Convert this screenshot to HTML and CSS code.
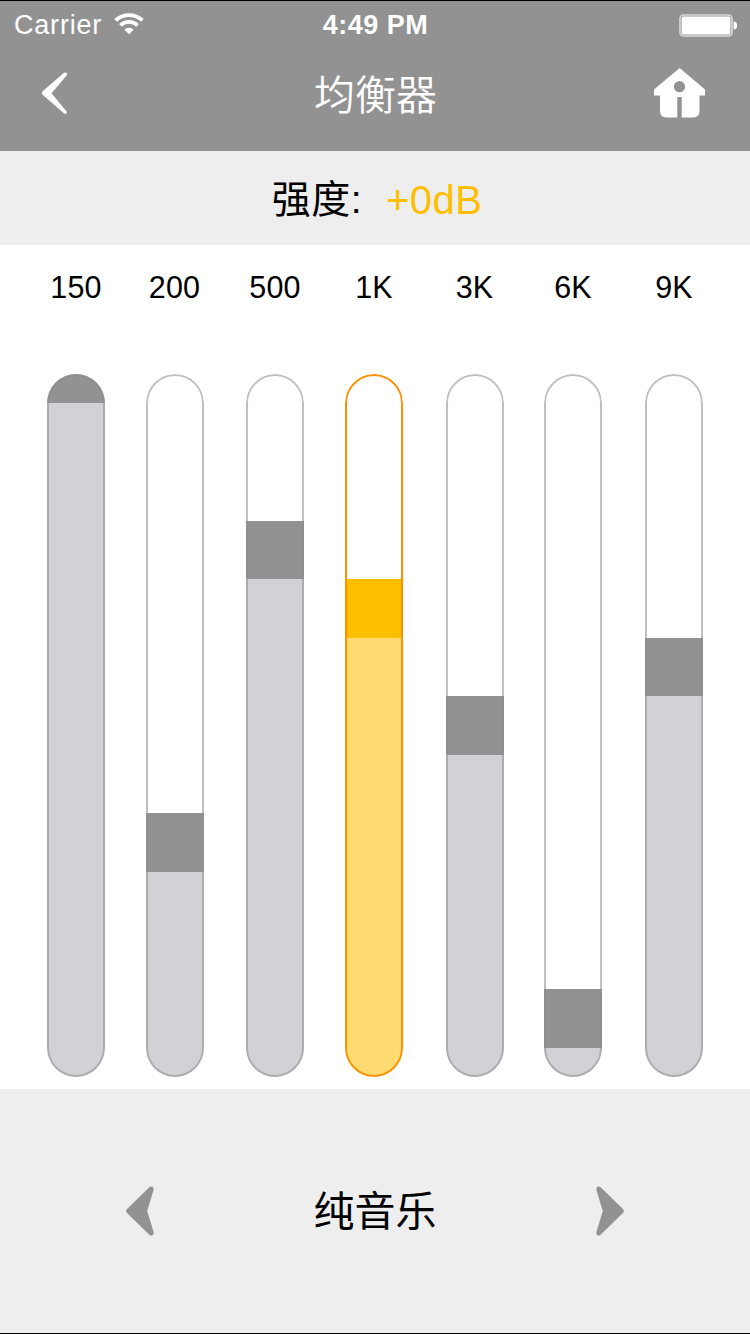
FILE: index.html
```html
<!DOCTYPE html>
<html lang="zh-CN">
<head>
    <meta charset="UTF-8">
    <meta name="viewport" content="width=device-width, initial-scale=1.0">
    <title>均衡器</title>
    <link rel="stylesheet" href="styles.css">
</head>
<body>
    <header class="header">
        <div class="status-bar">
            <div class="carrier">
                <span>Carrier</span>
                <svg class="wifi" width="30" height="22" viewBox="0 0 30 22">
                    <path d="M1.6 7.4A19.5 19.5 0 0 1 28.4 7.4" fill="none" stroke="#fff" stroke-width="3.8"/>
                    <path d="M6.4 12.4A12.3 12.3 0 0 1 23.6 12.4" fill="none" stroke="#fff" stroke-width="3.6"/>
                    <path d="M10.3 16.6A6.8 6.8 0 0 1 19.7 16.6L15 21.3Z" fill="#fff"/>
                </svg>
            </div>
            <span class="time">4:49 PM</span>
            <svg class="battery" width="58" height="24" viewBox="0 0 58 24">
                <rect x="1" y="1" width="52" height="21" rx="3.5" fill="none" stroke="#fff" stroke-opacity="0.65" stroke-width="1.6"/>
                <rect x="2.6" y="2.6" width="48.8" height="17.8" rx="1.5" fill="#fff"/>
                <path d="M54.6 7.5A3.6 4 0 0 1 54.6 15.5Z" fill="#fff"/>
            </svg>
        </div>
        <div class="nav-bar">
            <svg class="back" width="26" height="43" viewBox="0 0 26 43">
                <path d="M0.4 19.6L22 0.8Q24 0 25 1.2Q25.6 2.2 24.6 3.4L9.5 21.2L24.4 39.2Q25.4 40.6 24.6 41.6Q23.4 42.6 21.8 41.2L0.4 22.4Q-0.6 21 0.4 19.6Z" fill="#fff"/>
            </svg>
            <h1 class="title">均衡器</h1>
            <svg class="home" width="51" height="50" viewBox="0 0 51 50">
                <path fill-rule="evenodd" d="M25.7 0L51 21.5V27.5H45.5V43Q45.5 49.5 39 49.5H27.7V29H23.3V49.5H12.5Q6 49.5 6 43V27.5H0V21.5ZM25.5 13.1A5.6 5.6 0 1 0 25.5 24.3A5.6 5.6 0 1 0 25.5 13.1Z" fill="#fff"/>
            </svg>
        </div>
    </header>

    <div class="strength">
        <span class="strength-label">强度:</span>
        <span class="strength-value">+0dB</span>
    </div>

    <!-- 各频段滑块 -->
    <div class="equalizer">
        <div class="band">
            <span class="freq">150</span>
            <div class="track">
                <div class="handle" style="height: 29px"></div>
                <div class="fill"></div>
            </div>
        </div>
        <div class="band">
            <span class="freq">200</span>
            <div class="track">
                <div class="empty" style="height: 439px"></div>
                <div class="handle" style="height: 59px"></div>
                <div class="fill"></div>
            </div>
        </div>
        <div class="band">
            <span class="freq">500</span>
            <div class="track">
                <div class="empty" style="height: 147px"></div>
                <div class="handle" style="height: 58px"></div>
                <div class="fill"></div>
            </div>
        </div>
        <div class="band active">
            <span class="freq">1K</span>
            <div class="track">
                <div class="empty" style="height: 205px"></div>
                <div class="handle" style="height: 59px"></div>
                <div class="fill"></div>
            </div>
        </div>
        <div class="band">
            <span class="freq">3K</span>
            <div class="track">
                <div class="empty" style="height: 322px"></div>
                <div class="handle" style="height: 59px"></div>
                <div class="fill"></div>
            </div>
        </div>
        <div class="band">
            <span class="freq">6K</span>
            <div class="track">
                <div class="empty" style="height: 615px"></div>
                <div class="handle" style="height: 59px"></div>
                <div class="fill"></div>
            </div>
        </div>
        <div class="band">
            <span class="freq">9K</span>
            <div class="track">
                <div class="empty" style="height: 264px"></div>
                <div class="handle" style="height: 58px"></div>
                <div class="fill"></div>
            </div>
        </div>
    </div>

    <!-- 音效模式切换 -->
    <footer class="preset">
        <svg class="arrow" width="28" height="50" viewBox="0 0 28 50">
            <path d="M0.8 23.2L23.6 1Q25 -0.1 26.6 0.8Q27.9 1.8 27.6 4L21.2 25L27.6 46Q27.9 48.2 26.6 49.2Q25 50.1 23.6 49L0.8 26.8Q-0.5 25 0.8 23.2Z" fill="#929292"/>
        </svg>
        <span class="preset-name">纯音乐</span>
        <svg class="arrow next" width="28" height="50" viewBox="0 0 28 50">
            <path d="M0.8 23.2L23.6 1Q25 -0.1 26.6 0.8Q27.9 1.8 27.6 4L21.2 25L27.6 46Q27.9 48.2 26.6 49.2Q25 50.1 23.6 49L0.8 26.8Q-0.5 25 0.8 23.2Z" fill="#929292"/>
        </svg>
    </footer>
</body>
</html>
```
FILE: styles.css
```css
* {
    box-sizing: border-box;
}
body {
    margin: 0;
    width: 750px;
    height: 1334px;
    display: flex;
    flex-direction: column;
    font-family: "Liberation Sans", "Noto Sans CJK SC", sans-serif;
    background-color: #fff;
    color: #000;
    border-top: 1px solid #000;
    border-bottom: 1px solid #000;
    overflow: hidden;
}
svg {
    display: block;
}
.header {
    height: 150px;
    background-color: #929292;
    color: #fff;
}
.status-bar {
    height: 48px;
    padding: 1px 13px 0 14px;
    display: grid;
    grid-template-columns: 1fr auto 1fr;
    align-items: center;
    font-size: 27px;
}
.carrier {
    display: flex;
    align-items: center;
    gap: 12px;
    letter-spacing: 0.8px;
}
.wifi {
    margin-bottom: 3px;
}
.time {
    font-weight: bold;
    letter-spacing: 0.5px;
}
.battery {
    justify-self: end;
}
.nav-bar {
    height: 102px;
    padding: 0 45px 14px 42px;
    display: flex;
    align-items: center;
    justify-content: space-between;
}
.title {
    margin: 5px 0 0 29px;
    font-size: 41px;
    font-weight: 350;
    line-height: 60px;
}
.strength {
    height: 94px;
    padding: 4px 0 0 4px;
    display: flex;
    align-items: center;
    justify-content: center;
    gap: 24px;
    background-color: #eee;
    font-size: 39px;
    line-height: 60px;
}
.strength-label {
    letter-spacing: 0.5px;
}
.strength-value {
    color: #ffbf00;
    font-size: 40px;
    letter-spacing: 0.4px;
}
.equalizer {
    height: 844px;
    padding: 24px 0 0 47px;
    display: grid;
    grid-template-columns: 98.5px 100.5px 99px 100.5px 98.5px 101px 58px;
}
.band {
    width: 58px;
    display: flex;
    flex-direction: column;
    align-items: center;
}
.freq {
    height: 105px;
    font-size: 30.5px;
    line-height: 37px;
    letter-spacing: 0.2px;
}
.track {
    position: relative;
    width: 58px;
    height: 703px;
    display: flex;
    flex-direction: column;
    border-radius: 29px;
    overflow: hidden;
}
/* 半透明边框覆盖在滑块上 */
.track::after {
    content: "";
    position: absolute;
    inset: 0;
    border: 2px solid rgba(140, 140, 140, 0.55);
    border-radius: 29px;
}
.handle {
    background-color: #929292;
}
.fill {
    flex: 1;
    background-color: #d2d1d6;
}
.active .track::after {
    border-color: #ff9000;
}
.active .handle {
    background-color: #ffbf00;
}
.active .fill {
    background-color: #ffda70;
}
.preset {
    flex: 1;
    padding: 0 126px;
    display: flex;
    align-items: center;
    justify-content: space-between;
    background-color: #eee;
}
.preset-name {
    padding-top: 2px;
    font-size: 41px;
    line-height: 60px;
}
.next {
    transform: scaleX(-1);
}
```
